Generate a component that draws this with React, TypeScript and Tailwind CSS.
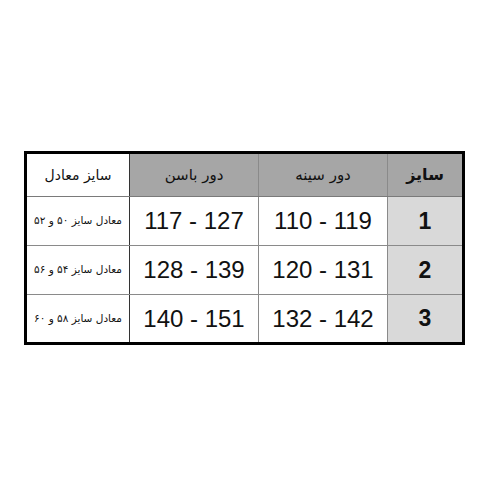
const rows = [
  { note: "معادل سایز ۵۰ و ۵۲", hip: "117 - 127", chest: "110 - 119", size: "1" },
  { note: "معادل سایز ۵۴ و ۵۶", hip: "128 - 139", chest: "120 - 131", size: "2" },
  { note: "معادل سایز ۵۸ و ۶۰", hip: "140 - 151", chest: "132 - 142", size: "3" },
];

const fa = { fontFamily: '"DejaVu Sans", "Noto Sans", sans-serif' };
const num = "font-['Liberation_Sans',Arial,sans-serif]";

export default function App() {
  return (
    <div className="w-[500px] h-[500px] bg-white pt-[151px] pl-[24px]">
      <div className="w-[441px] border-[3px] border-black text-[#111]">
        {/* header */}
        <div className="flex h-[43px] border-b border-[#7a7a7a]">
          <div
            dir="rtl"
            style={fa}
            className="w-[103px] border-r border-[#333] flex items-center justify-center text-[14px] bg-white"
          >
            سایز معادل
          </div>
          <div
            dir="rtl"
            style={fa}
            className="w-[129px] border-r border-[#8a8a8a] flex items-center justify-center text-[15px] bg-[#a6a6a6]"
          >
            دور باسن
          </div>
          <div
            dir="rtl"
            style={fa}
            className="w-[129px] border-r border-[#8a8a8a] flex items-center justify-center text-[15px] bg-[#a6a6a6]"
          >
            دور سینه
          </div>
          <div
            dir="rtl"
            style={fa}
            className="w-[74px] flex items-center justify-center text-[16px] font-bold bg-[#a6a6a6]"
          >
            سایز
          </div>
        </div>
        {rows.map((r, i) => (
          <div
            key={r.size}
            className={`flex ${i < 2 ? "h-[49px] border-b border-[#8a8a8a]" : "h-[47px]"}`}
          >
            <div
              dir="rtl"
              style={fa}
              className="w-[103px] border-r border-[#333] flex items-center justify-center text-[10.5px]"
            >
              {r.note}
            </div>
            <div
              className={`w-[129px] border-r border-[#8a8a8a] flex items-center justify-center text-[24px] ${num}`}
            >
              {r.hip}
            </div>
            <div
              className={`w-[129px] border-r border-[#8a8a8a] flex items-center justify-center text-[24px] ${num}`}
            >
              {r.chest}
            </div>
            <div
              className={`w-[74px] flex items-center justify-center text-[23px] font-bold bg-[#d9d9d9] ${num}`}
            >
              {r.size}
            </div>
          </div>
        ))}
      </div>
    </div>
  );
}
